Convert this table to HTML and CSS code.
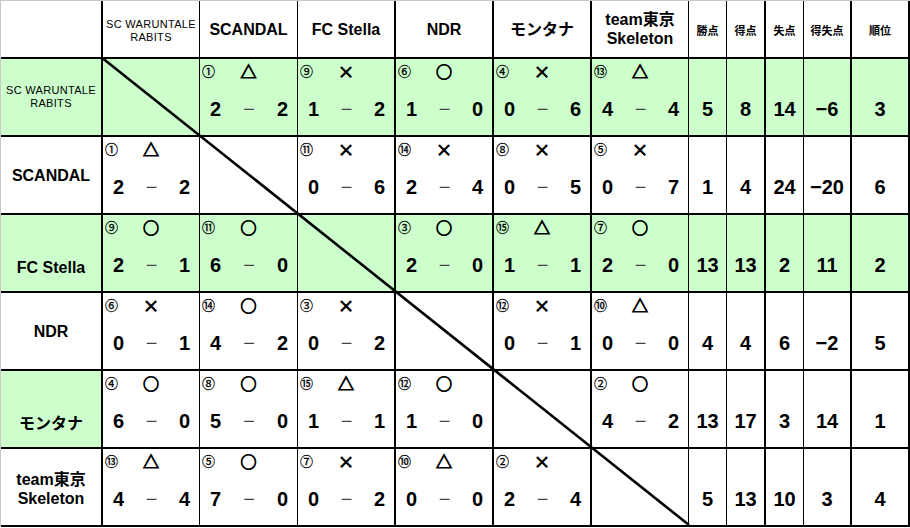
FILE: index.html
```html
<!DOCTYPE html>
<html lang="ja">
<head>
<meta charset="utf-8">
<title>星取表</title>
<link rel="stylesheet" href="styles.css">
</head>
<body>
<div class="board">
  <div class="grid">
    <!-- header -->
    <div class="hd"></div>
    <div class="hd small">SC WARUNTALE<br>RABITS</div>
    <div class="hd">SCANDAL</div>
    <div class="hd">FC Stella</div>
    <div class="hd">NDR</div>
    <div class="hd">モンタナ</div>
    <div class="hd two">team東京<br>Skeleton</div>
    <div class="hd lbl">勝点</div>
    <div class="hd lbl">得点</div>
    <div class="hd lbl">失点</div>
    <div class="hd lbl">得失点</div>
    <div class="hd lbl">順位</div>

    <!-- row 1 -->
    <div class="name small g">SC WARUNTALE<br>RABITS</div>
    <div class="x g"></div>
    <div class="m g"><div class="top"><span class="no">①</span><span class="res">△</span></div><div class="sc"><span>2</span><span class="dash">−</span><span>2</span></div></div>
    <div class="m g"><div class="top"><span class="no">⑨</span><span class="res">×</span></div><div class="sc"><span>1</span><span class="dash">−</span><span>2</span></div></div>
    <div class="m g"><div class="top"><span class="no">⑥</span><span class="res">○</span></div><div class="sc"><span>1</span><span class="dash">−</span><span>0</span></div></div>
    <div class="m g"><div class="top"><span class="no">④</span><span class="res">×</span></div><div class="sc"><span>0</span><span class="dash">−</span><span>6</span></div></div>
    <div class="m g"><div class="top"><span class="no">⑬</span><span class="res">△</span></div><div class="sc"><span>4</span><span class="dash">−</span><span>4</span></div></div>
    <div class="st g">5</div>
    <div class="st g">8</div>
    <div class="st g">14</div>
    <div class="st g">−6</div>
    <div class="st g">3</div>

    <!-- row 2 -->
    <div class="name">SCANDAL</div>
    <div class="m"><div class="top"><span class="no">①</span><span class="res">△</span></div><div class="sc"><span>2</span><span class="dash">−</span><span>2</span></div></div>
    <div class="x"></div>
    <div class="m"><div class="top"><span class="no">⑪</span><span class="res">×</span></div><div class="sc"><span>0</span><span class="dash">−</span><span>6</span></div></div>
    <div class="m"><div class="top"><span class="no">⑭</span><span class="res">×</span></div><div class="sc"><span>2</span><span class="dash">−</span><span>4</span></div></div>
    <div class="m"><div class="top"><span class="no">⑧</span><span class="res">×</span></div><div class="sc"><span>0</span><span class="dash">−</span><span>5</span></div></div>
    <div class="m"><div class="top"><span class="no">⑤</span><span class="res">×</span></div><div class="sc"><span>0</span><span class="dash">−</span><span>7</span></div></div>
    <div class="st">1</div>
    <div class="st">4</div>
    <div class="st">24</div>
    <div class="st">−20</div>
    <div class="st">6</div>

    <!-- row 3 -->
    <div class="name g low">FC Stella</div>
    <div class="m g"><div class="top"><span class="no">⑨</span><span class="res">○</span></div><div class="sc"><span>2</span><span class="dash">−</span><span>1</span></div></div>
    <div class="m g"><div class="top"><span class="no">⑪</span><span class="res">○</span></div><div class="sc"><span>6</span><span class="dash">−</span><span>0</span></div></div>
    <div class="x g"></div>
    <div class="m g"><div class="top"><span class="no">③</span><span class="res">○</span></div><div class="sc"><span>2</span><span class="dash">−</span><span>0</span></div></div>
    <div class="m g"><div class="top"><span class="no">⑮</span><span class="res">△</span></div><div class="sc"><span>1</span><span class="dash">−</span><span>1</span></div></div>
    <div class="m g"><div class="top"><span class="no">⑦</span><span class="res">○</span></div><div class="sc"><span>2</span><span class="dash">−</span><span>0</span></div></div>
    <div class="st g">13</div>
    <div class="st g">13</div>
    <div class="st g">2</div>
    <div class="st g">11</div>
    <div class="st g">2</div>

    <!-- row 4 -->
    <div class="name">NDR</div>
    <div class="m"><div class="top"><span class="no">⑥</span><span class="res">×</span></div><div class="sc"><span>0</span><span class="dash">−</span><span>1</span></div></div>
    <div class="m"><div class="top"><span class="no">⑭</span><span class="res">○</span></div><div class="sc"><span>4</span><span class="dash">−</span><span>2</span></div></div>
    <div class="m"><div class="top"><span class="no">③</span><span class="res">×</span></div><div class="sc"><span>0</span><span class="dash">−</span><span>2</span></div></div>
    <div class="x"></div>
    <div class="m"><div class="top"><span class="no">⑫</span><span class="res">×</span></div><div class="sc"><span>0</span><span class="dash">−</span><span>1</span></div></div>
    <div class="m"><div class="top"><span class="no">⑩</span><span class="res">△</span></div><div class="sc"><span>0</span><span class="dash">−</span><span>0</span></div></div>
    <div class="st">4</div>
    <div class="st">4</div>
    <div class="st">6</div>
    <div class="st">−2</div>
    <div class="st">5</div>

    <!-- row 5 -->
    <div class="name g low">モンタナ</div>
    <div class="m"><div class="top"><span class="no">④</span><span class="res">○</span></div><div class="sc"><span>6</span><span class="dash">−</span><span>0</span></div></div>
    <div class="m"><div class="top"><span class="no">⑧</span><span class="res">○</span></div><div class="sc"><span>5</span><span class="dash">−</span><span>0</span></div></div>
    <div class="m"><div class="top"><span class="no">⑮</span><span class="res">△</span></div><div class="sc"><span>1</span><span class="dash">−</span><span>1</span></div></div>
    <div class="m"><div class="top"><span class="no">⑫</span><span class="res">○</span></div><div class="sc"><span>1</span><span class="dash">−</span><span>0</span></div></div>
    <div class="x"></div>
    <div class="m"><div class="top"><span class="no">②</span><span class="res">○</span></div><div class="sc"><span>4</span><span class="dash">−</span><span>2</span></div></div>
    <div class="st">13</div>
    <div class="st">17</div>
    <div class="st">3</div>
    <div class="st">14</div>
    <div class="st">1</div>

    <!-- row 6 -->
    <div class="name two">team東京<br>Skeleton</div>
    <div class="m"><div class="top"><span class="no">⑬</span><span class="res">△</span></div><div class="sc"><span>4</span><span class="dash">−</span><span>4</span></div></div>
    <div class="m"><div class="top"><span class="no">⑤</span><span class="res">○</span></div><div class="sc"><span>7</span><span class="dash">−</span><span>0</span></div></div>
    <div class="m"><div class="top"><span class="no">⑦</span><span class="res">×</span></div><div class="sc"><span>0</span><span class="dash">−</span><span>2</span></div></div>
    <div class="m"><div class="top"><span class="no">⑩</span><span class="res">△</span></div><div class="sc"><span>0</span><span class="dash">−</span><span>0</span></div></div>
    <div class="m"><div class="top"><span class="no">②</span><span class="res">×</span></div><div class="sc"><span>2</span><span class="dash">−</span><span>4</span></div></div>
    <div class="x"></div>
    <div class="st">5</div>
    <div class="st">13</div>
    <div class="st">10</div>
    <div class="st">3</div>
    <div class="st">4</div>
  </div>
  <svg class="diag" width="910" height="528" viewBox="0 0 910 528" aria-hidden="true">
    <line x1="101" y1="57" x2="689" y2="525" stroke="#000" stroke-width="2.6"/>
  </svg>
</div>
</body>
</html>
```

FILE: styles.css
```css
html, body {
  margin: 0;
  padding: 0;
  background: #ffffff;
}

body {
  font-family: "Liberation Sans", "Noto Sans CJK JP", sans-serif;
  color: #000;
  width: 910px;
  height: 528px;
  overflow: hidden;
}

.board {
  position: relative;
  width: 910px;
  height: 528px;
}

.grid {
  display: grid;
  grid-template-columns: 102px 97px 98px 98px 98px 98px 97px 38px 39px 38px 48px 58px;
  grid-template-rows: 58px repeat(6, 78px);
  border-top: 1px solid #c8c8c8;
  border-left: 1px solid #c8c8c8;
  width: 909px;
}

.grid > div {
  box-sizing: border-box;
  border-bottom: 2px solid #000;
  border-right: 1px solid #000;
  background: #ffffff;
}

.grid > div:nth-child(12n+1),
.grid > div:nth-child(12n+4),
.grid > div:nth-child(12n+5),
.grid > div:nth-child(12n+6),
.grid > div:nth-child(12n+9),
.grid > div:nth-child(12n+11),
.grid > div:nth-child(12n+12) {
  border-right-width: 2px;
}

.grid > div.g {
  background: #ccffcc;
}

/* header */
.hd {
  display: flex;
  align-items: center;
  justify-content: center;
  text-align: center;
  font-weight: bold;
  font-size: 16px;
  line-height: 19px;
}

.hd.small,
.name.small {
  font-weight: normal;
  font-size: 11px;
  line-height: 13px;
  letter-spacing: 0.3px;
}

.hd.small {
  padding-top: 3px;
}

.hd.lbl {
  font-family: "Noto Sans CJK JP", sans-serif;
  font-size: 11px;
  letter-spacing: 0;
  padding-top: 3px;
}

/* team names */
.name {
  display: flex;
  align-items: center;
  justify-content: center;
  text-align: center;
  font-weight: bold;
  font-size: 16px;
  line-height: 19px;
}

.name.low {
  align-items: flex-end;
  padding-bottom: 14px;
}

.name.two {
  padding-top: 3px;
}

/* match cells */
.m {
  display: flex;
  flex-direction: column;
}

.top {
  display: grid;
  grid-template-columns: 1fr auto 1fr;
  align-items: center;
  height: 22px;
  padding-top: 1px;
}

.no {
  font-family: "Noto Sans CJK JP", sans-serif;
  font-weight: normal;
  font-size: 13px;
  line-height: 16px;
  padding-left: 2px;
  justify-self: start;
  -webkit-text-stroke: 0.3px #000;
}

.res {
  font-family: "Noto Sans CJK JP", sans-serif;
  font-weight: normal;
  font-size: 16px;
  line-height: 18px;
  -webkit-text-stroke: 1px #000;
}

.sc {
  display: grid;
  grid-template-columns: 1fr auto 1fr;
  margin-top: 15px;
  padding: 0 9px 0 10px;
  font-weight: bold;
  font-size: 20px;
  line-height: 24px;
}

.sc span:first-child {
  justify-self: start;
}

.sc span:last-child {
  justify-self: end;
}

.dash {
  font-weight: normal;
  color: #444;
}

/* stats */
.st {
  text-align: center;
  font-weight: bold;
  font-size: 20px;
  line-height: 24px;
  padding-top: 38px;
}

/* diagonal line over the blank self-match cells */
.diag {
  position: absolute;
  left: 0;
  top: 0;
  pointer-events: none;
}
```
